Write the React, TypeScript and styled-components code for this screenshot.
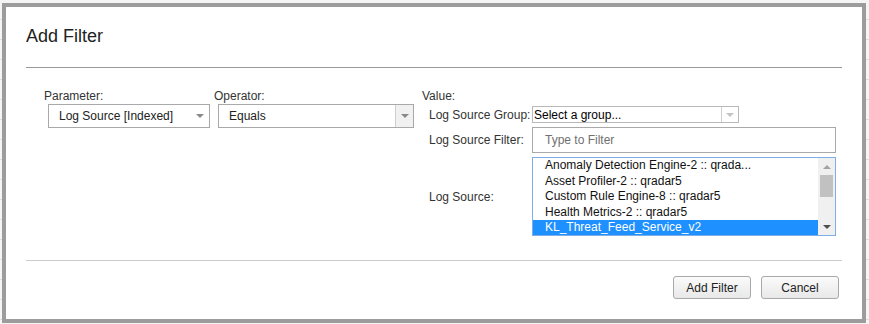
import styled, { createGlobalStyle } from "styled-components";

const GlobalStyle = createGlobalStyle`
  html, body {
    margin: 0;
    padding: 0;
  }
  body {
    font-family: "Liberation Sans", Arial, sans-serif;
    background: #f4f4f4;
  }
`;

const Backdrop = styled.div`
  width: 869px;
  height: 324px;
  box-sizing: border-box;
  padding: 3px 3px 1px 2px;
  overflow: hidden;
  background-color: #f5f5f5;
  background-image: repeating-linear-gradient(
    to bottom,
    transparent 0,
    transparent 19px,
    #dedede 19px,
    #dedede 20px
  );
`;

const Dialog = styled.div`
  width: 864px;
  height: 320px;
  box-sizing: border-box;
  border: 4px solid #9c9c9c;
  background: #fff;
  display: flex;
  flex-direction: column;
`;

const Header = styled.div`
  padding: 19px 20px 0;
`;

const Title = styled.h1`
  margin: 0;
  font-size: 18px;
  line-height: 21px;
  font-weight: normal;
  color: #222;
`;

const Divider = styled.div<{ $color: string; $top: number }>`
  height: 1px;
  margin: ${(p) => p.$top}px 20px 0;
  background: ${(p) => p.$color};
`;

const Form = styled.div`
  display: flex;
  padding: 21px 0 0 38px;
`;

const Column = styled.div<{ $width: number }>`
  width: ${(p) => p.$width}px;
  display: flex;
  flex-direction: column;
`;

const Label = styled.div`
  font-size: 12px;
  line-height: 14px;
  color: #333;
  white-space: nowrap;
`;

const FieldWrap = styled.div`
  padding: 1px 0 0 4px;
`;

const Select = styled.div<{ $width: number; $height: number }>`
  width: ${(p) => p.$width}px;
  height: ${(p) => p.$height}px;
  box-sizing: border-box;
  border: 1px solid #a9a9a9;
  background: #fff;
  display: flex;
  align-items: center;
  font-size: 12px;
  color: #222;
`;

const SelectText = styled.div<{ $pad: number }>`
  flex: 1;
  padding-left: ${(p) => p.$pad}px;
  white-space: nowrap;
  overflow: hidden;
`;

const ArrowBox = styled.div<{ $width: number; $separated?: boolean; $bg?: string }>`
  width: ${(p) => p.$width}px;
  align-self: stretch;
  display: flex;
  align-items: center;
  justify-content: center;
  border-left: ${(p) => (p.$separated ? "1px solid #cfcfcf" : "none")};
  background: ${(p) => p.$bg ?? "transparent"};
`;

const Caret = styled.div<{ $color: string; $up?: boolean }>`
  width: 0;
  height: 0;
  border-left: 4px solid transparent;
  border-right: 4px solid transparent;
  ${(p) =>
    p.$up
      ? `border-bottom: 4px solid ${p.$color};`
      : `border-top: 4px solid ${p.$color};`}
`;

const ValueTable = styled.div`
  display: grid;
  grid-template-columns: 103px 304px;
  padding: 3px 0 0 7px;
`;

const RowLabel = styled(Label)<{ $top: number }>`
  margin-top: ${(p) => p.$top}px;
  align-self: center;
`;

const RowField = styled.div<{ $top: number }>`
  margin-top: ${(p) => p.$top}px;
`;

const GroupSelect = styled(Select)`
  border-color: #b9b9b9;
  color: #000;
`;

const FilterInput = styled.input`
  width: 304px;
  height: 26px;
  box-sizing: border-box;
  border: 1px solid #a9a9a9;
  padding: 0 0 0 12px;
  margin: 0;
  font-family: "Liberation Sans", Arial, sans-serif;
  font-size: 12px;
  outline: none;
  &::placeholder {
    color: #707070;
  }
`;

const ListBox = styled.div`
  width: 304px;
  height: 79px;
  box-sizing: border-box;
  border: 1px solid #7eaee8;
  display: flex;
  background: #fff;
`;

const Items = styled.div`
  flex: 1;
  overflow: hidden;
`;

const Item = styled.div<{ $selected?: boolean }>`
  height: 15.5px;
  line-height: 15.5px;
  padding-left: 12px;
  font-size: 12px;
  white-space: nowrap;
  color: ${(p) => (p.$selected ? "#fff" : "#111")};
  background: ${(p) => (p.$selected ? "#1e90ff" : "transparent")};
`;

const ScrollBar = styled.div`
  width: 17px;
  background: #f0f0f0;
  display: flex;
  flex-direction: column;
`;

const ScrollButton = styled.div`
  height: 17px;
  display: flex;
  align-items: center;
  justify-content: center;
`;

const Thumb = styled.div`
  height: 22px;
  margin: 0 2px;
  background: #c1c1c1;
`;

const Spacer = styled.div`
  flex: 1;
`;

const Footer = styled.div`
  display: flex;
  justify-content: flex-end;
  gap: 10px;
  padding: 15px 23px 0 0;
`;

const Button = styled.button`
  min-width: 78px;
  height: 23px;
  box-sizing: border-box;
  padding: 0 12px;
  border: 1px solid #a8a8a8;
  border-radius: 3px;
  background: linear-gradient(#fbfbfb, #e8e8e8);
  font-family: "Liberation Sans", Arial, sans-serif;
  font-size: 12px;
  color: #222;
`;

const sources = [
  "Anomaly Detection Engine-2 :: qrada...",
  "Asset Profiler-2 :: qradar5",
  "Custom Rule Engine-8 :: qradar5",
  "Health Metrics-2 :: qradar5",
  "KL_Threat_Feed_Service_v2",
];

export default function App() {
  return (
    <>
      <GlobalStyle />
      <Backdrop>
        <Dialog>
          <Header>
            <Title>Add Filter</Title>
          </Header>
          <Divider $color="#9a9a9a" $top={20} />

          <Form>
            <Column $width={170}>
              <Label>Parameter:</Label>
              <FieldWrap>
                <Select $width={162} $height={24}>
                  <SelectText $pad={10}>Log Source [Indexed]</SelectText>
                  <ArrowBox $width={18}>
                    <Caret $color="#8a8a8a" />
                  </ArrowBox>
                </Select>
              </FieldWrap>
            </Column>

            <Column $width={208}>
              <Label>Operator:</Label>
              <FieldWrap>
                <Select $width={196} $height={24}>
                  <SelectText $pad={10}>Equals</SelectText>
                  <ArrowBox $width={17} $separated $bg="#f1f1f1">
                    <Caret $color="#8a8a8a" />
                  </ArrowBox>
                </Select>
              </FieldWrap>
            </Column>

            <Column $width={420}>
              <Label>Value:</Label>
              <ValueTable>
                <RowLabel $top={0}>Log Source Group:</RowLabel>
                <RowField $top={0}>
                  <GroupSelect $width={207} $height={17}>
                    <SelectText $pad={1}>Select a group...</SelectText>
                    <ArrowBox $width={16} $separated>
                      <Caret $color="#c4c4c4" />
                    </ArrowBox>
                  </GroupSelect>
                </RowField>

                <RowLabel $top={4}>Log Source Filter:</RowLabel>
                <RowField $top={4}>
                  <FilterInput placeholder="Type to Filter" />
                </RowField>

                <RowLabel $top={4}>Log Source:</RowLabel>
                <RowField $top={4}>
                  <ListBox>
                    <Items>
                      {sources.map((s, i) => (
                        <Item key={s} $selected={i === sources.length - 1}>
                          {s}
                        </Item>
                      ))}
                    </Items>
                    <ScrollBar>
                      <ScrollButton>
                        <Caret $color="#a3a3a3" $up />
                      </ScrollButton>
                      <Thumb />
                      <Spacer />
                      <ScrollButton>
                        <Caret $color="#505050" />
                      </ScrollButton>
                    </ScrollBar>
                  </ListBox>
                </RowField>
              </ValueTable>
            </Column>
          </Form>

          <Divider $color="#cccccc" $top={24} />
          <Footer>
            <Button>Add Filter</Button>
            <Button>Cancel</Button>
          </Footer>
        </Dialog>
      </Backdrop>
    </>
  );
}
